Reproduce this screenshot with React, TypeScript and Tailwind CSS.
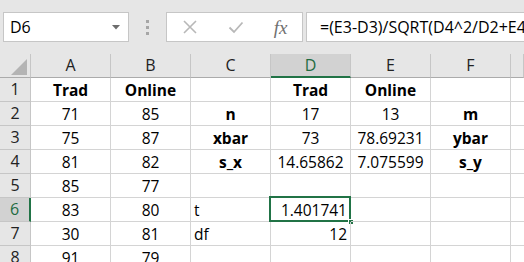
type Align = 'c' | 'l' | 'r';
type Cell = { v: string; b?: boolean; a?: Align };

const cols = ['A', 'B', 'C', 'D', 'E', 'F', ''];

const c = (v: string, b = false): Cell => ({ v, b, a: 'c' });

const rows: Cell[][] = [
  [c('Trad', true), c('Online', true), c(''), c('Trad', true), c('Online', true), c('')],
  [c('71'), c('85'), c('n', true), c('17'), c('13'), c('m', true)],
  [c('75'), c('87'), c('xbar', true), c('73'), c('78.69231'), c('ybar', true)],
  [c('81'), c('82'), c('s_x', true), c('14.65862'), c('7.075599'), c('s_y', true)],
  [c('85'), c('77'), c(''), c(''), c(''), c('')],
  [c('83'), c('80'), { v: 't', a: 'l' }, { v: '1.401741', a: 'r' }, c(''), c('')],
  [c('30'), c('81'), { v: 'df', a: 'l' }, { v: '12', a: 'r' }, c(''), c('')],
  [c('91'), c('79'), c(''), c(''), c(''), c('')],
];

const alignCls: Record<Align, string> = {
  c: 'text-center',
  l: 'text-left',
  r: 'text-right',
};

export default function App() {
  return (
    <div className="w-[524px] h-[262px] overflow-hidden bg-white font-['Open_Sans',sans-serif] text-black">
      {/* formula bar */}
      <div className="h-[54px] bg-[#e6e6e6] pt-[12px] flex items-start">
        <div className="ml-[3px] w-[126px] h-[30px] bg-white border border-[#c6c6c6] flex items-center pl-[6px] pr-[8px]">
          <span className="text-[16px] leading-none flex-1">D6</span>
          <svg width="8" height="5" viewBox="0 0 8 5">
            <path d="M0 0h8L4 4.5z" fill="#6d6d6d" />
          </svg>
        </div>
        <div className="w-[37px] h-[30px] flex flex-col items-center justify-center gap-[3px]">
          <div className="w-[3px] h-[3px] bg-[#a6a6a6]" />
          <div className="w-[3px] h-[3px] bg-[#a6a6a6]" />
          <div className="w-[3px] h-[3px] bg-[#a6a6a6]" />
        </div>
        <div className="w-[137px] h-[30px] bg-white border border-[#c6c6c6] flex items-center">
          <div className="w-[46px] flex justify-center">
            <svg width="16" height="16" viewBox="0 0 16 16">
              <path d="M2 2L14 14M14 2L2 14" stroke="#b8b8b8" strokeWidth="1.6" />
            </svg>
          </div>
          <div className="w-[46px] flex justify-center">
            <svg width="16" height="14" viewBox="0 0 16 14">
              <path d="M1.5 7.5L6 12L14.5 2.5" stroke="#b8b8b8" strokeWidth="1.8" fill="none" />
            </svg>
          </div>
          <div className="flex-1 flex justify-center">
            <span className="font-['Liberation_Serif',serif] italic text-[19px] leading-none text-[#707070]">fx</span>
          </div>
        </div>
        <div className="ml-[3px] flex-1 h-[30px] bg-white border border-r-0 border-[#c6c6c6] flex items-center pl-[13px] overflow-hidden whitespace-nowrap">
          <span className="text-[16px] leading-none">=(E3-D3)/SQRT(D4^2/D2+E4^2/E2)</span>
        </div>
      </div>

      {/* sheet */}
      <div className="grid grid-cols-[31px_80px_80px_80px_80px_80px_80px_1fr]">
        {/* column headers */}
        <div className="h-[24px] bg-[#e6e6e6] border-r border-b border-r-[#c6c6c6] border-b-[#ababab] flex items-end justify-end pr-[3px] pb-[2px]">
          <svg width="16" height="16" viewBox="0 0 16 16">
            <path d="M0 16H16V0z" fill="#b4b4b4" />
          </svg>
        </div>
        {cols.map((col, i) =>
          col === 'D' ? (
            <div
              key={i}
              className="h-[24px] bg-[#d2d2d2] border-r border-r-[#c6c6c6] border-b-2 border-b-[#217346] text-center text-[16px] leading-[23px] text-[#1e6b41]"
            >
              {col}
            </div>
          ) : (
            <div
              key={i}
              className="h-[24px] bg-[#e6e6e6] border-r border-b border-r-[#c6c6c6] border-b-[#ababab] text-center text-[16px] leading-[23px] text-[#222]"
            >
              {col}
            </div>
          )
        )}

        {rows.map((row, r) => (
          <Row key={r} n={r + 1} row={row} />
        ))}
      </div>
    </div>
  );
}

function Row({ n, row }: { n: number; row: Cell[] }) {
  const sel = n === 6;
  return (
    <>
      <div
        className={
          sel
            ? 'h-[24px] bg-[#d2d2d2] border-b border-b-[#c6c6c6] border-r-2 border-r-[#217346] text-center text-[16px] leading-[23px] text-[#1e6b41]'
            : 'h-[24px] bg-[#e6e6e6] border-b border-r border-[#c6c6c6] text-center text-[16px] leading-[23px] text-[#222]'
        }
      >
        {n}
      </div>
      {row.map((cell, i) => (
        <div
          key={i}
          className={`relative h-[24px] border-b border-r border-[#d4d4d4] px-[3px] pt-[1px] leading-[22px] text-[15.5px] whitespace-nowrap ${alignCls[cell.a ?? 'c']} ${cell.b ? 'font-bold text-[14px]' : ''}`}
        >
          {cell.v}
          {sel && i === 3 && (
            <>
              <div className="absolute -left-[2px] -top-[2px] -right-[1px] -bottom-[1px] border-2 border-[#217346]" />
              <div className="absolute -right-[4px] -bottom-[4px] w-[6px] h-[6px] bg-[#217346] border border-white" />
            </>
          )}
        </div>
      ))}
      <div className="h-[24px] border-b border-[#d4d4d4]" />
    </>
  );
}
